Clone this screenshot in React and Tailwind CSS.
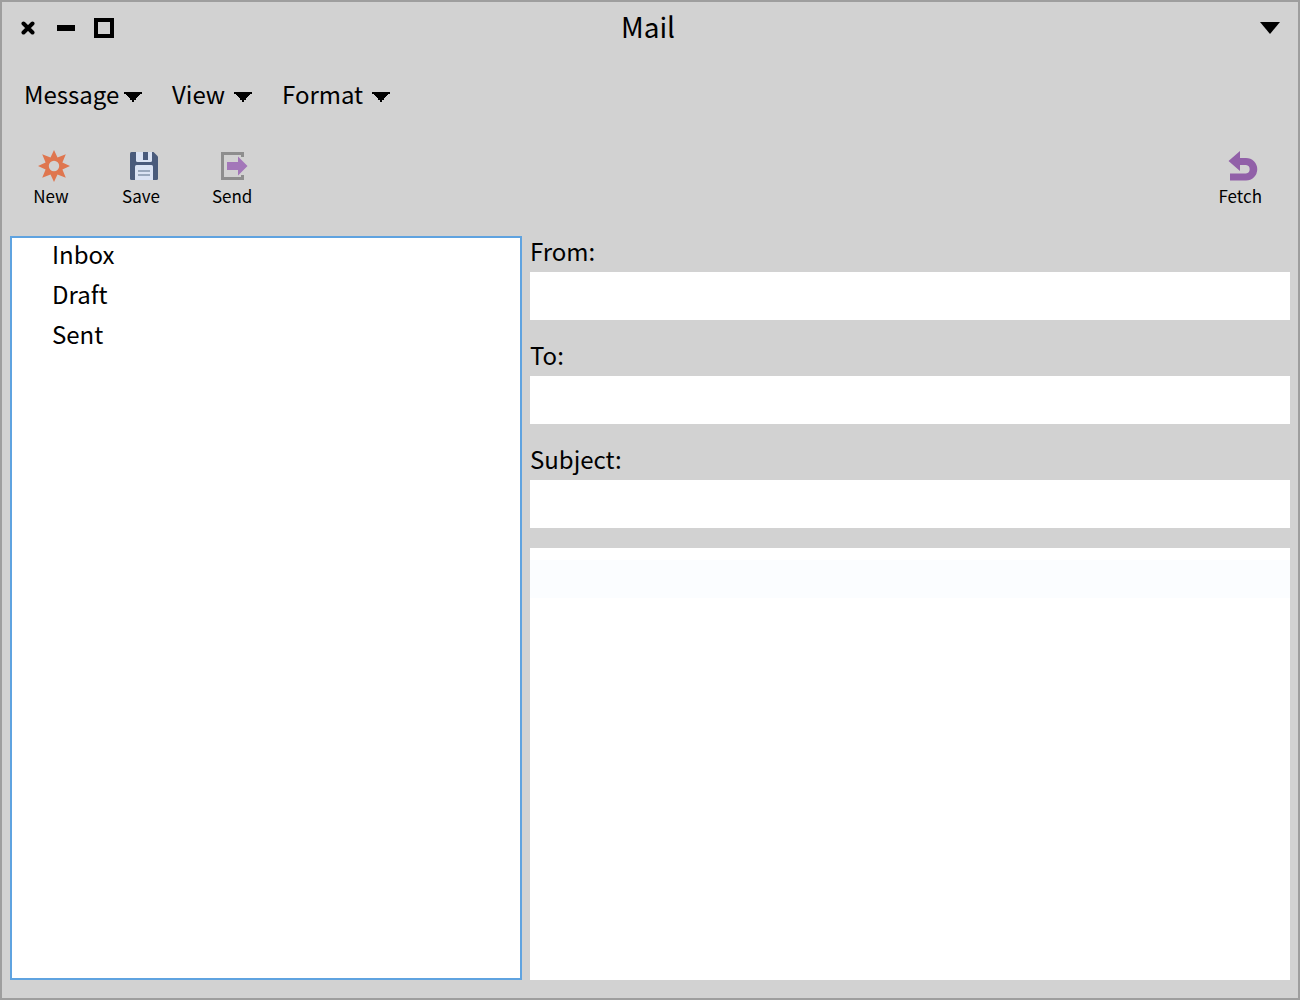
import React from "react";

const menus = [
  { label: "Message", width: "w-[118px]" },
  { label: "View", width: "w-20" },
  { label: "Format", width: "w-[108px]" },
];

const folders = ["Inbox", "Draft", "Sent"];
const fields = ["From:", "To:", "Subject:"];

function MenuArrow() {
  return (
    <svg width="18" height="10" viewBox="0 0 18 10" shapeRendering="crispEdges" aria-hidden="true">
      <path d="M0 0h18v2h-2v1h-1v1h-1v1h-1v1h-1v2h-2v2H8V8H6V6H5V5H4V4H3V3H2V2H0z" fill="#000" />
    </svg>
  );
}

function NewIcon() {
  return (
    <svg width="32" height="32" viewBox="0 0 32 32" aria-hidden="true">
      <path
        fillRule="evenodd"
        fill="#df764f"
        d="M16 0l3.500 7.600 8.300-3.400-3.400 8.300L32 16l-7.600 3.500 3.400 8.300-8.300-3.400L16 32l-3.500-7.600-8.300 3.400 3.400-8.300L0 16l7.600-3.500-3.400-8.300 8.300 3.400zM16 10.800a5.200 5.200 0 1 0 0 10.400 5.200 5.200 0 0 0 0-10.400z"
      />
    </svg>
  );
}

function SaveIcon() {
  return (
    <svg width="28" height="28" viewBox="0 0 28 28" aria-hidden="true">
      <path d="M1.500 0H23.500L28 4.500V26.500Q28 28 26.500 28H1.500Q0 28 0 26.500V1.500Q0 0 1.500 0z" fill="#4a5b7c" />
      <path d="M6 0h16v8.500q0 1.500-1.500 1.500h-13Q6 10 6 8.500z" fill="#dbe3f4" />
      <path d="M13 0h5v8h-5z" fill="#4a5b7c" />
      <path d="M5 14.500Q5 13 6.500 13h15q1.500 0 1.500 1.500V28H5z" fill="#dbe3f4" />
      <path d="M8 18h12v2H8zM8 22h12v2H8z" fill="#9aa8bd" />
    </svg>
  );
}

function SendIcon() {
  return (
    <svg width="28" height="28" viewBox="0 0 28 28" aria-hidden="true">
      <path d="M0 0h23v5h-3V3H3v22h17v-2h3v5H0z" fill="#8e8e8e" />
      <path d="M6 10h11V4.500L26.500 14 17 23.500V18H6z" fill="#a377b9" />
    </svg>
  );
}

function FetchIcon() {
  return (
    <svg width="30" height="30" viewBox="0 0 30 30" aria-hidden="true">
      <path d="M12 0v7h6a11 11 0 0 1 0 22.500H2V22.500h16a4.300 4.300 0 0 0 0-8.500h-6v6L0.500 10z" fill="#9160a8" />
    </svg>
  );
}

function ToolButton({ label, icon }) {
  return (
    <button type="button" className="flex flex-col items-center">
      <span className="flex h-8 items-center pl-1.5">{icon}</span>
      <span className="text-[17px] leading-7">{label}</span>
    </button>
  );
}

export default function App() {
  return (
    <div
      className="flex min-h-screen flex-col border-2 border-[#9e9e9e] bg-[#d2d2d2] px-2 pb-[18px] text-[24px] text-black"
      style={{ fontFamily: '"Noto Sans CJK SC", sans-serif' }}
    >
      <header className="grid h-[52px] grid-cols-[1fr_auto_1fr] items-center px-2.5">
        <div className="flex items-center">
          <button type="button" aria-label="Close" className="w-[37px]">
            <svg width="16" height="14" viewBox="0 0 16 14" aria-hidden="true">
              <path d="M3.500 2.500l9 9M12.500 2.500l-9 9" stroke="#000" strokeWidth="4" strokeLinecap="round" />
            </svg>
          </button>
          <button type="button" aria-label="Minimize" className="w-[37px]">
            <svg width="18" height="6" viewBox="0 0 18 6" aria-hidden="true">
              <path d="M0 0h18v6H0z" />
            </svg>
          </button>
          <button type="button" aria-label="Maximize">
            <svg width="20" height="20" viewBox="0 0 20 20" aria-hidden="true">
              <path d="M2 2h16v16H2z" fill="none" stroke="#000" strokeWidth="4" />
            </svg>
          </button>
        </div>
        <h1 className="pr-1 pb-1 text-[28px] leading-12">Mail</h1>
        <button type="button" aria-label="Window menu" className="justify-self-end">
          <svg width="20" height="12" viewBox="0 0 20 12" aria-hidden="true">
            <path d="M0 0h20L10 12z" />
          </svg>
        </button>
      </header>

      <nav className="flex h-20 items-center gap-[30px] px-3.5">
        {menus.map((m) => (
          <button key={m.label} type="button" className={"flex items-center justify-between " + m.width}>
            {m.label}
            <span className="pt-1.5">
              <MenuArrow />
            </span>
          </button>
        ))}
      </nav>

      <div className="flex h-[102px] items-start justify-between pt-4 pr-7 pl-[22px]">
        <div className="flex gap-[52px]">
          <ToolButton label="New" icon={<NewIcon />} />
          <ToolButton label="Save" icon={<SaveIcon />} />
          <ToolButton label="Send" icon={<SendIcon />} />
        </div>
        <ToolButton label="Fetch" icon={<FetchIcon />} />
      </div>

      <main className="grid grow grid-cols-[64fr_95fr] gap-2">
        <ul className="border-2 border-[#5fa3e0] bg-white pl-10">
          {folders.map((f) => (
            <li key={f}>
              <button type="button" className="block w-full pb-2 text-left leading-8">
                {f}
              </button>
            </li>
          ))}
        </ul>
        <form className="flex flex-col" onSubmit={(e) => e.preventDefault()}>
          {fields.map((f) => (
            <label key={f} className="mb-5 block">
              <span className="block pb-1.5 leading-[30px]">{f}</span>
              <input type="text" className="block h-12 w-full bg-white px-2 outline-none" />
            </label>
          ))}
          <textarea
            aria-label="Message body"
            className="block w-full grow resize-none bg-[linear-gradient(#fff_12px,#fbfdff_12px,#fbfdff_50px,#fff_50px)] p-2 outline-none"
          />
        </form>
      </main>
    </div>
  );
}
